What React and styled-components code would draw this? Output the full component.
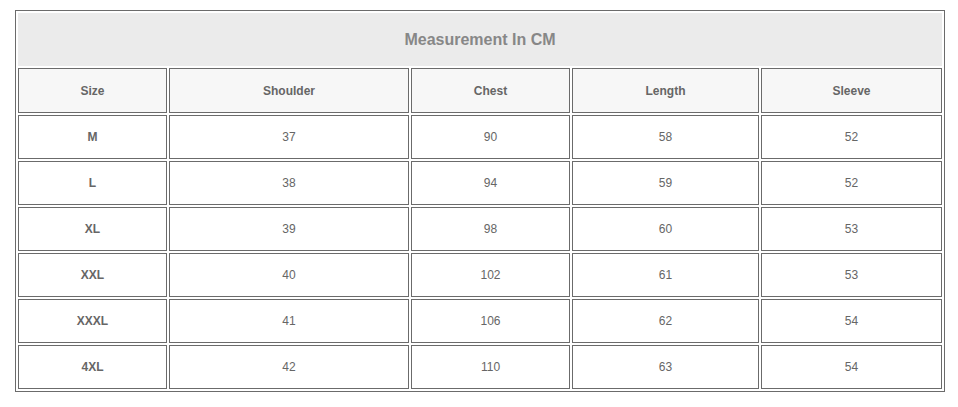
import React from 'react';
import styled, { createGlobalStyle } from 'styled-components';

const GlobalStyle = createGlobalStyle`
  html, body {
    margin: 0;
    padding: 0;
    background: #ffffff;
    font-family: "Liberation Sans", Arial, sans-serif;
  }
`;

const Page = styled.div`
  padding: 10px 0 0 15px;
`;

const Table = styled.table`
  width: 930px;
  table-layout: fixed;
  border-collapse: separate;
  border-spacing: 2px;
  border: 1px solid #6b6b6b;
`;

const Col = styled.col`
  width: ${(p) => p.$w}px;
`;

const TitleCell = styled.th`
  height: 53px;
  padding: 0;
  background: #ebebeb;
  color: #878787;
  font-size: 16px;
  font-weight: bold;
  text-align: center;
`;

const HeadCell = styled.th`
  box-sizing: border-box;
  height: 45px;
  padding: 0;
  border: 1px solid #6b6b6b;
  background: #f7f7f7;
  color: #666666;
  font-size: 12px;
  font-weight: bold;
  text-align: center;
`;

const Cell = styled.td`
  box-sizing: border-box;
  height: 44px;
  padding: 0;
  border: 1px solid #6b6b6b;
  background: #ffffff;
  color: #666666;
  font-size: 12px;
  font-weight: ${(p) => (p.$bold ? 'bold' : 'normal')};
  text-align: center;
`;

const columns = [
  { name: 'Size', w: 149 },
  { name: 'Shoulder', w: 240 },
  { name: 'Chest', w: 159 },
  { name: 'Length', w: 187 },
  { name: 'Sleeve', w: 181 },
];

const rows = [
  ['M', 37, 90, 58, 52],
  ['L', 38, 94, 59, 52],
  ['XL', 39, 98, 60, 53],
  ['XXL', 40, 102, 61, 53],
  ['XXXL', 41, 106, 62, 54],
  ['4XL', 42, 110, 63, 54],
];

export default function App() {
  return (
    <>
      <GlobalStyle />
      <Page>
        <Table>
          <colgroup>
            {columns.map((c) => (
              <Col key={c.name} $w={c.w} />
            ))}
          </colgroup>
          <thead>
            <tr>
              <TitleCell colSpan={5}>Measurement In CM</TitleCell>
            </tr>
            <tr>
              {columns.map((c) => (
                <HeadCell key={c.name}>{c.name}</HeadCell>
              ))}
            </tr>
          </thead>
          <tbody>
            {rows.map((r) => (
              <tr key={r[0]}>
                {r.map((v, i) => (
                  <Cell key={i} $bold={i === 0}>
                    {v}
                  </Cell>
                ))}
              </tr>
            ))}
          </tbody>
        </Table>
      </Page>
    </>
  );
}
